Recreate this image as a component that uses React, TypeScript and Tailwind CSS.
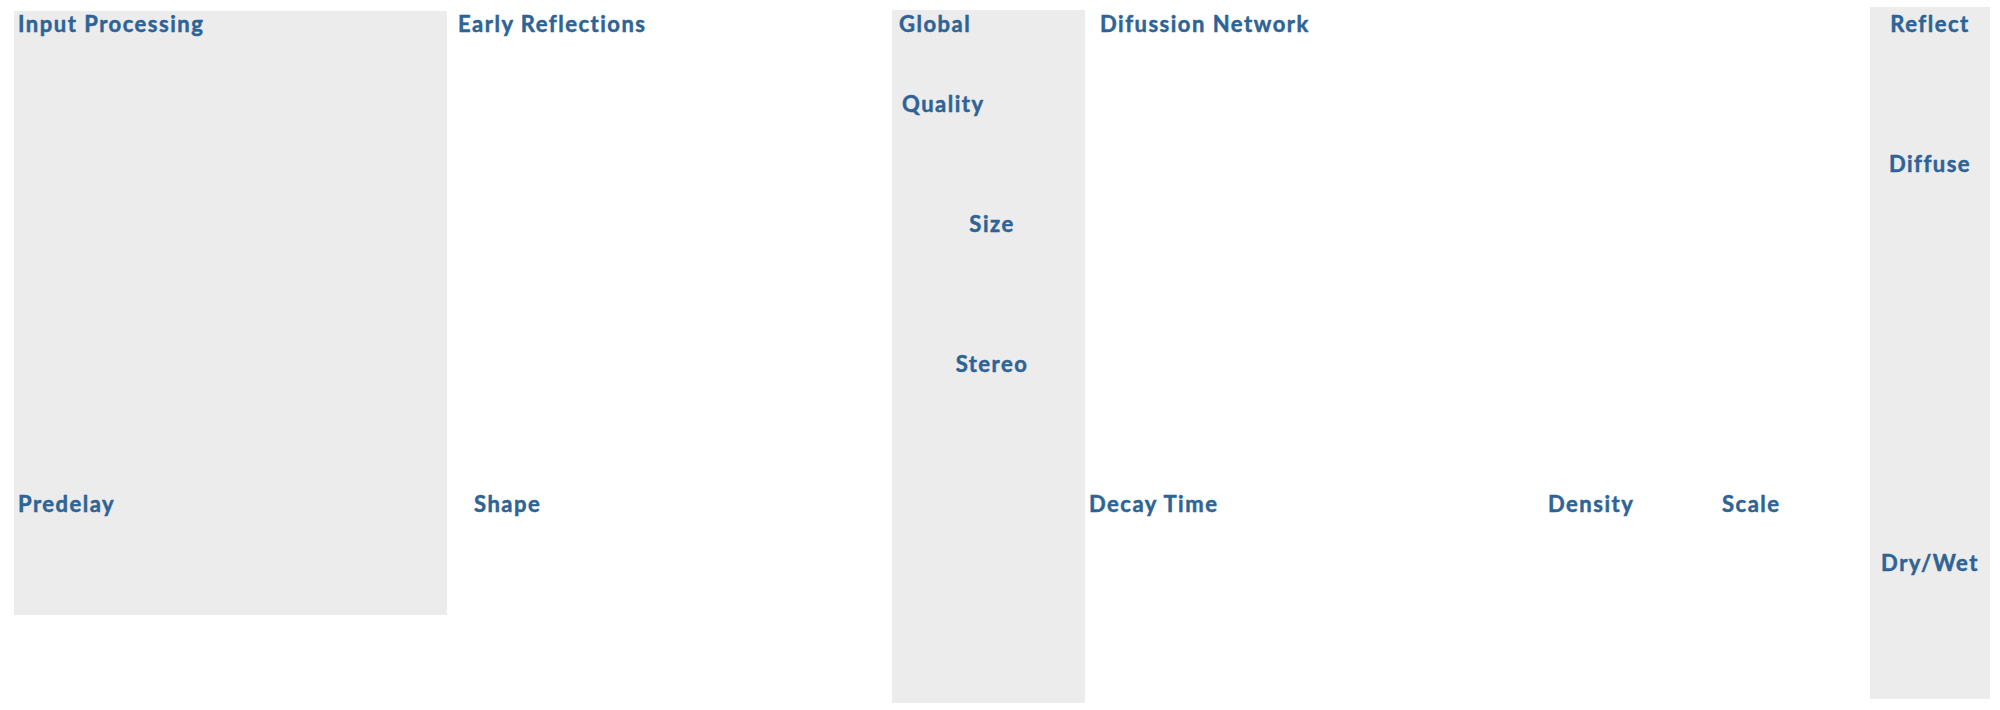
import React from "react";

const L = "text-[22px] leading-[22px] font-bold tracking-[1.5px] text-[#2e6395] [-webkit-text-stroke:0.5px_#2e6395] whitespace-nowrap";

export default function App() {
  return (
    <div className="w-[2000px] h-[710px] bg-white flex items-start [font-family:Lato,sans-serif] overflow-hidden">
      {/* Input Processing */}
      <div className="ml-[14px] mt-[11px] w-[433px] h-[604px] bg-[#ececec] flex flex-col pl-[4px] pt-[2px]">
        <div className={L}>Input Processing</div>
        <div className={`${L} mt-[458px]`}>Predelay</div>
      </div>
      {/* Early Reflections */}
      <div className="w-[445px] flex flex-col pl-[11px] pt-[13px]">
        <div className={L}>Early Reflections</div>
        <div className={`${L} mt-[458px] ml-[16px]`}>Shape</div>
      </div>
      {/* Global */}
      <div className="mt-[10px] w-[193px] h-[693px] bg-[#ececec] flex flex-col pl-[7px] pt-[3px]">
        <div className={L}>Global</div>
        <div className={`${L} mt-[58px] ml-[3px]`}>Quality</div>
        <div className={`${L} mt-[98px] text-center`}>Size</div>
        <div className={`${L} mt-[118px] text-center`}>Stereo</div>
      </div>
      {/* Diffusion Network */}
      <div className="w-[785px] flex flex-col pt-[13px]">
        <div className={`${L} ml-[15px]`}>Difussion Network</div>
        <div className="flex mt-[458px] ml-[4px]">
          <div className={`${L} w-[459px]`}>Decay Time</div>
          <div className={`${L} w-[174px]`}>Density</div>
          <div className={L}>Scale</div>
        </div>
      </div>
      {/* Reflect / Diffuse / Dry-Wet */}
      <div className="mt-[7px] w-[120px] h-[692px] bg-[#ececec] flex flex-col items-center pt-[6px]">
        <div className={L}>Reflect</div>
        <div className={`${L} mt-[118px]`}>Diffuse</div>
        <div className={`${L} mt-[377px]`}>Dry/Wet</div>
      </div>
    </div>
  );
}
